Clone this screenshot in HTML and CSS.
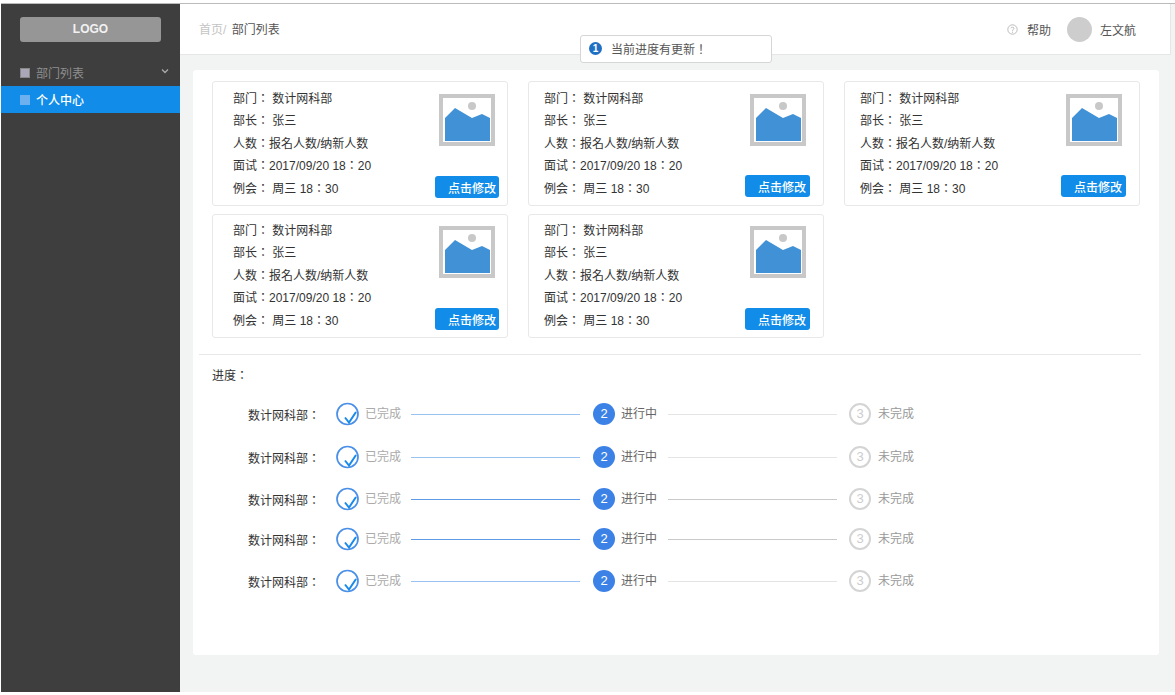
FILE: index.html
```html
<!DOCTYPE html>
<html lang="en">
<head>
    <meta charset="UTF-8">
    <meta name="viewport" content="width=device-width, initial-scale=1.0">
    <title>部门列表</title>
    <link rel="stylesheet" href="styles.css">
</head>
<body>

<div class="app">
    <aside class="sidebar">
        <div class="logo">LOGO</div>
        <div class="menu-item">
            <span class="menu-square"></span>部门列表
            <svg class="menu-arrow" width="8" height="6" viewBox="0 0 8 6"><path d="M1 1.5 4 4.500 7 1.500" fill="none" stroke="#aaa" stroke-width="1.3"/></svg>
        </div>
        <div class="menu-item menu-item-active"><span class="menu-square"></span>个人中心</div>
    </aside>

    <div class="content">
        <header class="topbar">
            <div class="crumbs"><span class="crumb-home">首页/</span> 部门列表</div>
            <div class="top-right">
                <svg class="help-icon" width="11" height="11" viewBox="0 0 11 11"><circle cx="5.5" cy="5.5" r="4.7" fill="none" stroke="#bbb"/><path d="M4 4.3C4 2.8 7 2.8 7 4.4 7 5.4 5.5 5.4 5.5 6.8" fill="none" stroke="#bbb"/><circle cx="5.5" cy="8.2" r=".6" fill="#bbb"/></svg>
                <span class="help-text">帮助</span>
                <span class="avatar"></span>
                <span class="user-name">左文航</span>
            </div>
        </header>

        <div class="notice">
            <span class="notice-icon">1</span><span class="notice-text">当前进度有更新！</span>
        </div>

        <main class="panel">
            <div class="dept-grid">
                <div class="dept-card dept-card-first">
                    <div class="dept-info">
                        <div>部门： 数计网科部</div>
                        <div>部长： 张三</div>
                        <div>人数：报名人数/纳新人数</div>
                        <div>面试：2017/09/20 18：20</div>
                        <div>例会： 周三 18：30</div>
                    </div>
                    <div class="dept-side">
                        <svg class="dept-pic" width="56" height="52" viewBox="0 0 56 52"><rect width="56" height="52" fill="#c8c8c8"/><rect x="4" y="4" width="48" height="44" fill="#fff"/><circle cx="33" cy="12" r="4" fill="#c8c8c8"/><path d="M6 24 16 14 33 24 43 20 51 24V47H6Z" fill="#4091d6"/></svg>
                        <button class="edit-btn">点击修改</button>
                    </div>
                </div>
                <div class="dept-card dept-card-short">
                    <div class="dept-info">
                        <div>部门： 数计网科部</div>
                        <div>部长： 张三</div>
                        <div>人数：报名人数/纳新人数</div>
                        <div>面试：2017/09/20 18：20</div>
                        <div>例会： 周三 18：30</div>
                    </div>
                    <div class="dept-side">
                        <svg class="dept-pic" width="56" height="52" viewBox="0 0 56 52"><rect width="56" height="52" fill="#c8c8c8"/><rect x="4" y="4" width="48" height="44" fill="#fff"/><circle cx="33" cy="12" r="4" fill="#c8c8c8"/><path d="M6 24 16 14 33 24 43 20 51 24V47H6Z" fill="#4091d6"/></svg>
                        <button class="edit-btn">点击修改</button>
                    </div>
                </div>
                <div class="dept-card dept-card-short">
                    <div class="dept-info">
                        <div>部门： 数计网科部</div>
                        <div>部长： 张三</div>
                        <div>人数：报名人数/纳新人数</div>
                        <div>面试：2017/09/20 18：20</div>
                        <div>例会： 周三 18：30</div>
                    </div>
                    <div class="dept-side">
                        <svg class="dept-pic" width="56" height="52" viewBox="0 0 56 52"><rect width="56" height="52" fill="#c8c8c8"/><rect x="4" y="4" width="48" height="44" fill="#fff"/><circle cx="33" cy="12" r="4" fill="#c8c8c8"/><path d="M6 24 16 14 33 24 43 20 51 24V47H6Z" fill="#4091d6"/></svg>
                        <button class="edit-btn">点击修改</button>
                    </div>
                </div>
                <div class="dept-card dept-card-first dept-card-low">
                    <div class="dept-info">
                        <div>部门： 数计网科部</div>
                        <div>部长： 张三</div>
                        <div>人数：报名人数/纳新人数</div>
                        <div>面试：2017/09/20 18：20</div>
                        <div>例会： 周三 18：30</div>
                    </div>
                    <div class="dept-side">
                        <svg class="dept-pic" width="56" height="52" viewBox="0 0 56 52"><rect width="56" height="52" fill="#c8c8c8"/><rect x="4" y="4" width="48" height="44" fill="#fff"/><circle cx="33" cy="12" r="4" fill="#c8c8c8"/><path d="M6 24 16 14 33 24 43 20 51 24V47H6Z" fill="#4091d6"/></svg>
                        <button class="edit-btn">点击修改</button>
                    </div>
                </div>
                <div class="dept-card dept-card-low">
                    <div class="dept-info">
                        <div>部门： 数计网科部</div>
                        <div>部长： 张三</div>
                        <div>人数：报名人数/纳新人数</div>
                        <div>面试：2017/09/20 18：20</div>
                        <div>例会： 周三 18：30</div>
                    </div>
                    <div class="dept-side">
                        <svg class="dept-pic" width="56" height="52" viewBox="0 0 56 52"><rect width="56" height="52" fill="#c8c8c8"/><rect x="4" y="4" width="48" height="44" fill="#fff"/><circle cx="33" cy="12" r="4" fill="#c8c8c8"/><path d="M6 24 16 14 33 24 43 20 51 24V47H6Z" fill="#4091d6"/></svg>
                        <button class="edit-btn">点击修改</button>
                    </div>
                </div>
            </div>

            <div class="progress">
                <div class="progress-title">进度：</div>

                <div class="progress-row progress-row-a">
                    <span class="row-name">数计网科部：</span>
                    <svg class="step-done" width="23" height="24" viewBox="0 0 23 24"><circle cx="11.500" cy="12" r="10.500" fill="none" stroke="#4a8fe8" stroke-width="1.7"/><path d="M9 15.500 13 20.500 20 10" fill="none" stroke="#1a8be8" stroke-width="2"/></svg>
                    <span class="step-text">已完成</span>
                    <span class="step-line line-light"></span>
                    <span class="step-now">2</span>
                    <span class="step-text step-text-now">进行中</span>
                    <span class="step-line line-grey"></span>
                    <span class="step-todo">3</span>
                    <span class="step-text step-text-todo">未完成</span>
                </div>

                <div class="progress-row">
                    <span class="row-name">数计网科部：</span>
                    <svg class="step-done" width="23" height="24" viewBox="0 0 23 24"><circle cx="11.500" cy="12" r="10.500" fill="none" stroke="#4a8fe8" stroke-width="1.7"/><path d="M9 15.500 13 20.500 20 10" fill="none" stroke="#1a8be8" stroke-width="2"/></svg>
                    <span class="step-text">已完成</span>
                    <span class="step-line line-light"></span>
                    <span class="step-now">2</span>
                    <span class="step-text step-text-now">进行中</span>
                    <span class="step-line line-grey"></span>
                    <span class="step-todo">3</span>
                    <span class="step-text step-text-todo">未完成</span>
                </div>

                <div class="progress-row progress-row-c">
                    <span class="row-name">数计网科部：</span>
                    <svg class="step-done" width="23" height="24" viewBox="0 0 23 24"><circle cx="11.500" cy="12" r="10.500" fill="none" stroke="#4a8fe8" stroke-width="1.7"/><path d="M9 15.500 13 20.500 20 10" fill="none" stroke="#1a8be8" stroke-width="2"/></svg>
                    <span class="step-text">已完成</span>
                    <span class="step-line line-strong"></span>
                    <span class="step-now">2</span>
                    <span class="step-text step-text-now">进行中</span>
                    <span class="step-line line-mid"></span>
                    <span class="step-todo">3</span>
                    <span class="step-text step-text-todo">未完成</span>
                </div>

                <div class="progress-row">
                    <span class="row-name">数计网科部：</span>
                    <svg class="step-done" width="23" height="24" viewBox="0 0 23 24"><circle cx="11.500" cy="12" r="10.500" fill="none" stroke="#4a8fe8" stroke-width="1.7"/><path d="M9 15.500 13 20.500 20 10" fill="none" stroke="#1a8be8" stroke-width="2"/></svg>
                    <span class="step-text">已完成</span>
                    <span class="step-line line-strong"></span>
                    <span class="step-now">2</span>
                    <span class="step-text step-text-now">进行中</span>
                    <span class="step-line line-mid"></span>
                    <span class="step-todo">3</span>
                    <span class="step-text step-text-todo">未完成</span>
                </div>

                <div class="progress-row">
                    <span class="row-name">数计网科部：</span>
                    <svg class="step-done" width="23" height="24" viewBox="0 0 23 24"><circle cx="11.500" cy="12" r="10.500" fill="none" stroke="#4a8fe8" stroke-width="1.7"/><path d="M9 15.500 13 20.500 20 10" fill="none" stroke="#1a8be8" stroke-width="2"/></svg>
                    <span class="step-text">已完成</span>
                    <span class="step-line line-light"></span>
                    <span class="step-now">2</span>
                    <span class="step-text step-text-now">进行中</span>
                    <span class="step-line line-grey"></span>
                    <span class="step-todo">3</span>
                    <span class="step-text step-text-todo">未完成</span>
                </div>
            </div>
        </main>
    </div>
</div>

</body>
</html>
```

FILE: styles.css
```css
html, body {
    margin: 0;
    height: 100%;
    background-color: #fff;
    overflow: hidden;
}

body {
    font-family: "Liberation Sans", "Noto Sans CJK TC", sans-serif;
    font-size: 12px;
    color: #333;
}

.app {
    display: flex;
    height: 688px;
    margin: 3px 0 0 1px;
    border-top: 1px solid #bbb;
    position: relative;
}

/* sidebar */
.sidebar {
    width: 179px;
    flex-shrink: 0;
    background-color: #3e3e3e;
    padding-top: 13px;
    box-sizing: border-box;
}

.logo {
    width: 141px;
    height: 25px;
    margin: 0 0 17px 19px;
    border-radius: 3px;
    background-color: #969696;
    color: #f2f2f2;
    font-weight: bold;
    text-align: center;
    line-height: 25px;
}

.menu-item {
    display: flex;
    align-items: center;
    height: 27px;
    padding: 0 11px 0 19px;
    color: #8e8e8e;
    font-size: 12px;
}

.menu-square {
    width: 10px;
    height: 10px;
    margin-right: 6px;
    background-color: #aaa8b8;
    border: 1px solid #888;
    box-sizing: border-box;
}

.menu-arrow {
    margin-left: auto;
    margin-top: -3px;
}

.menu-item-active {
    background-color: #118ce9;
    color: #fff;
    font-weight: 500;
}

.menu-item-active .menu-square {
    background-color: #6db0f0;
    border: none;
}

/* header */
.content {
    flex: 1;
    background-color: #f2f4f4;
    position: relative;
}

.topbar {
    display: flex;
    justify-content: space-between;
    align-items: center;
    height: 50px;
    margin-right: 4px;
    background-color: #fff;
    border-bottom: 1px solid #e6e6e6;
    border-right: 1px solid #e6e6e6;
    padding: 0 34px 0 19px;
}

.crumbs {
    color: #555;
    margin-top: -2px;
}

.crumb-home {
    color: #c4c4c4;
    margin-right: 2px;
}

.top-right {
    display: flex;
    align-items: center;
}

.help-icon {
    margin-right: 9px;
}

.help-text {
    color: #555;
    margin-right: 16px;
}

.avatar {
    width: 25px;
    height: 25px;
    border-radius: 50%;
    background-color: #cdcdcd;
    margin-right: 8px;
}

.user-name {
    color: #555;
    padding-top: 1px;
}

.notice {
    position: absolute;
    left: 400px;
    top: 31px;
    width: 190px;
    height: 26px;
    display: flex;
    align-items: center;
    background-color: #fff;
    border: 1px solid #d6d6d6;
    border-radius: 3px;
    color: #555;
    z-index: 2;
}

.notice-icon {
    width: 13px;
    height: 13px;
    margin: 0 9px 2px 8px;
    border-radius: 50%;
    background-color: #1f6fc4;
    color: #fff;
    font-size: 10px;
    font-weight: bold;
    text-align: center;
    line-height: 13px;
}

.notice-text {
    padding-bottom: 1px;
}

/* main panel */
.panel {
    margin: 15px 0 0 13px;
    width: 966px;
    height: 585px;
    background-color: #fff;
    border-radius: 3px;
    padding: 11px 0 0 19px;
    box-sizing: border-box;
}

.dept-grid {
    display: grid;
    grid-template-columns: repeat(3, 296px);
    grid-template-rows: 125px 124px;
    column-gap: 20px;
    row-gap: 8px;
}

.dept-card {
    display: flex;
    justify-content: space-between;
    border: 1px solid #e8e8e8;
    border-radius: 3px;
    padding: 6px 13px 7px 15px;
    box-sizing: border-box;
}

.dept-card-first {
    padding-left: 20px;
    padding-right: 8px;
}

.dept-card-short {
    padding-bottom: 8px;
}

.dept-card-low {
    padding-top: 5px;
}

.dept-info {
    line-height: 22.4px;
}

.dept-side {
    display: flex;
    flex-direction: column;
    justify-content: space-between;
    align-items: flex-end;
}

.dept-pic {
    display: block;
    margin: 6px 4px 0 0;
}

.edit-btn {
    width: 65px;
    height: 22px;
    border: none;
    border-radius: 3px;
    background-color: #118ce9;
    color: #fff;
    font-family: inherit;
    font-size: 12px;
    font-weight: 500;
    padding: 0 4px 0 0;
    text-align: right;
}

.dept-card-first .edit-btn {
    width: 64px;
    padding-right: 3px;
}

/* progress */
.progress {
    margin: 16px 18px 0 -13px;
    border-top: 1px solid #e8e8e8;
    padding: 14px 0 0 13px;
}

.progress-title {
    line-height: 14px;
    margin-bottom: 19px;
}

.progress-row {
    display: flex;
    align-items: center;
    height: 24px;
    margin-bottom: 18px;
}

.progress-row-a {
    margin-bottom: 19px;
}

.progress-row-c {
    margin-bottom: 16px;
}

.row-name {
    width: 88px;
    margin-left: 36px;
}

.step-done {
    flex-shrink: 0;
}

.step-text {
    width: 46px;
    margin-left: 6px;
    color: #aaa;
    margin-top: -3px;
}

.step-text-now {
    width: 47px;
    color: #666;
}

.step-text-todo {
    color: #999;
    margin-left: 7px;
}

.step-line {
    height: 1px;
    width: 169px;
}

.line-light {
    background-color: #9cc2f2;
}

.line-strong {
    background-color: #5f9ae6;
}

.line-grey {
    background-color: #e4e4e4;
}

.line-mid {
    background-color: #c9c9c9;
}

.step-now, .step-todo {
    width: 22px;
    height: 22px;
    border-radius: 50%;
    box-sizing: border-box;
    text-align: center;
    line-height: 22px;
    font-size: 13px;
}

.step-now {
    margin-left: 13px;
    background-color: #3c82e6;
    color: #fff;
}

.step-todo {
    margin-left: 12px;
    border: 2px solid #d4d4d4;
    color: #ccc;
    line-height: 18px;
}
```
